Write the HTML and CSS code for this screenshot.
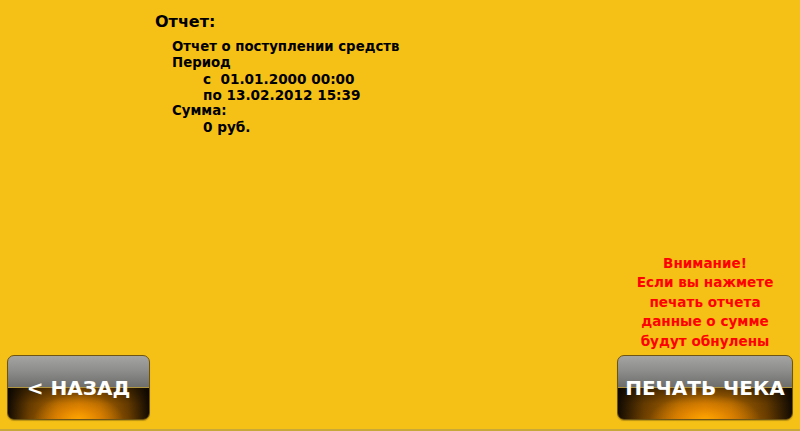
FILE: index.html
```html
<!DOCTYPE html>
<html lang="ru">
<head>
<meta charset="utf-8">
<link rel="stylesheet" href="styles.css">
</head>
<body>
<div class="page">
  <div class="report">
    <div class="title">Отчет:</div>
    <div class="body">
      <div class="line">Отчет о поступлении средств</div>
      <div class="line">Период</div>
      <div class="line ind">с&nbsp; 01.01.2000 00:00</div>
      <div class="line ind">по 13.02.2012 15:39</div>
      <div class="line">Сумма:</div>
      <div class="line ind">0 руб.</div>
    </div>
  </div>
  <div class="bottom">
    <div class="btn back">&lt; НАЗАД</div>
    <div class="right">
      <div class="warn">Внимание!<br>Если вы нажмете<br>печать отчета<br>данные о сумме<br>будут обнулены</div>
      <div class="btn print">ПЕЧАТЬ ЧЕКА</div>
    </div>
  </div>
  <div class="baseline"></div>
</div>
</body>
</html>
```
FILE: styles.css
```css
html, body { margin: 0; padding: 0; }
body {
  background: #f6c117;
  font-family: "DejaVu Sans", Verdana, sans-serif;
  font-weight: bold;
  color: #000;
}
.page {
  width: 800px;
  height: 431px;
  display: flex;
  flex-direction: column;
  overflow: hidden;
}
.report {
  padding: 12px 0 0 155px;
  flex: 1;
}
.title {
  font-size: 16px;
  line-height: 20px;
}
.body {
  padding: 7px 0 0 17px;
  font-size: 13.3px;
  line-height: 16px;
}
.ind { padding-left: 31px; font-size: 13.6px; }
.bottom {
  display: flex;
  justify-content: space-between;
  align-items: flex-end;
  padding: 0 7px 9px 7px;
}
.right {
  display: flex;
  flex-direction: column;
  align-items: center;
}
.warn {
  color: #ff0000;
  font-size: 13.6px;
  line-height: 19.5px;
  text-align: center;
  margin-bottom: 4px;
}
.btn {
  height: 65px;
  border-radius: 7px;
  box-sizing: border-box;
  border: 1px solid #6e5414;
  color: #fff;
  font-size: 20px;
  display: flex;
  align-items: center;
  justify-content: center;
  background:
    linear-gradient(to bottom, #a4a4a2 0%, #8e8e8c 45%, #6c6c6a 100%) top / 100% 50% no-repeat,
    radial-gradient(ellipse 32% 80% at 50% 100%, rgba(255,165,0,1) 0%, rgba(255,150,0,0.55) 45%, rgba(255,140,0,0) 100%) bottom / 100% 50% no-repeat,
    linear-gradient(to bottom, rgba(0,0,0,0.5) 0%, rgba(0,0,0,0.1) 50%, rgba(0,0,0,0) 100%) bottom / 100% 50% no-repeat,
    linear-gradient(to right, #120b02 0%, #6e4000 15%, #b86c00 35%, #cc7800 50%, #b86c00 65%, #6e4000 85%, #120b02 100%) bottom / 100% 50% no-repeat;
  box-shadow: 0 1px 1px rgba(0,0,0,0.25);
}
.back { width: 143px; }
.print { width: 176px; }
.baseline {
  height: 2px;
  background: #c8a838;
}
```
